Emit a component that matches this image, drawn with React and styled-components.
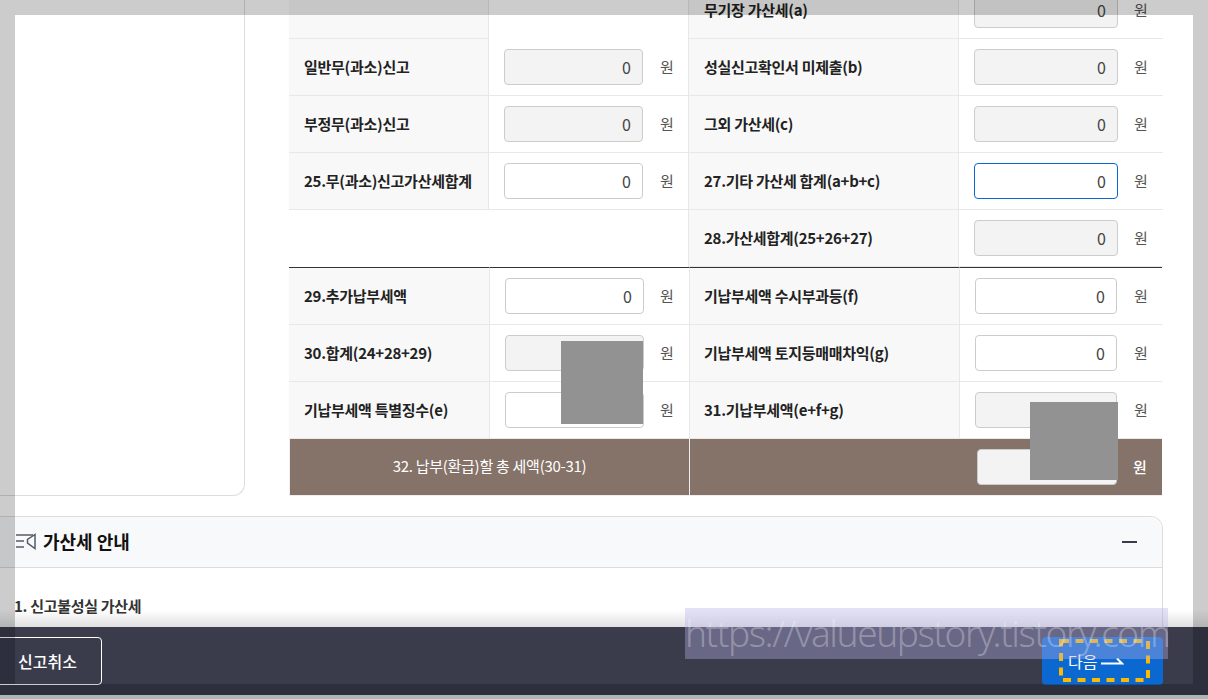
import React from "react";
import styled, { createGlobalStyle } from "styled-components";

const GlobalStyle = createGlobalStyle`
  html, body { margin: 0; padding: 0; background: #fff; }
  body { font-family: "Noto Sans CJK KR", "Noto Sans", sans-serif; }
  * { box-sizing: border-box; }
`;

const Screen = styled.div`
  position: relative;
  width: 1208px;
  height: 699px;
  overflow: hidden;
  display: flex;
  flex-direction: column;
  background: #fff;
`;

const Content = styled.div`
  flex: none;
  height: 627px;
  overflow: hidden;
`;

const Upper = styled.div`
  display: flex;
  gap: 44px;
  margin-top: -18px;
`;

const SidePanel = styled.div`
  flex: none;
  width: 245px;
  height: 514px;
  border-right: 1px solid #dcdcdc;
  border-bottom: 1px solid #dcdcdc;
  border-bottom-right-radius: 12px;
`;

const Tables = styled.div`
  width: 874px;
`;

const Row = styled.div`
  display: grid;
  grid-template-columns: ${(p) => p.$columns};
  height: ${(p) => (p.$first ? 58 : 57)}px;
`;

const Cell = styled.div`
  display: flex;
  align-items: center;
  min-width: 0;
  border-right: 1px solid #e8e8e8;
  border-bottom: 1px solid #e8e8e8;
  border-top: ${(p) => (p.$first ? "1px solid #333" : "0")};
  &:last-child { border-right: 0; }
`;

const Label = styled(Cell)`
  padding: 0 0 2px ${(p) => p.$inset || 15}px;
  background: #f8f8f8;
  color: #222;
  font-size: 15px;
  font-weight: 700;
  letter-spacing: -0.28px;
  white-space: nowrap;
`;

const Value = styled(Cell)`
  gap: ${(p) => p.$gap}px;
  padding-left: 15px;
`;

const Blank = styled(Cell)`
  grid-column: span ${(p) => p.$span};
  border-bottom: 0;
`;

const Amount = styled.input`
  flex: none;
  width: ${(p) => p.$width}px;
  height: 36px;
  padding: 0 11px 0 0;
  border: 1px solid ${(p) => (p.$focused ? "#0b68d0" : "#ccc")};
  border-radius: 4px;
  outline: 0;
  background: ${(p) => (p.$locked ? "#f3f3f3" : "#fff")};
  color: #444;
  font-family: inherit;
  font-size: 16px;
  text-align: right;
`;

const Unit = styled.span`
  position: relative;
  top: -1px;
  color: #555;
  font-size: 15px;
  line-height: 1;
`;

const TotalRow = styled.div`
  display: grid;
  grid-template-columns: 400px 472px;
  width: 873px;
  height: 57px;
  background: #857268;
  border-left: 1px solid #eee;
  border-bottom: 1px solid #eee;
  color: #fff;
`;

const TotalLabel = styled.div`
  display: flex;
  align-items: center;
  justify-content: center;
  padding-bottom: 3px;
  border-right: 1px solid #eee;
  font-size: 15px;
  letter-spacing: -0.28px;
`;

const TotalValue = styled.div`
  display: flex;
  align-items: center;
  gap: 16px;
  padding-left: 287px;
`;

const TotalUnit = styled(Unit)`
  color: #fff;
  font-weight: 500;
`;

const NoticeCard = styled.section`
  width: 1175px;
  height: 200px;
  margin: 20px 0 0 -12px;
  border: 1px solid #dcdcdc;
  border-radius: 12px;
`;

const NoticeHeader = styled.header`
  display: flex;
  align-items: center;
  gap: 7px;
  height: 51px;
  padding: 0 25px 0 27px;
  background: #f8f9fb;
  border-bottom: 1px solid #dcdcdc;
  border-radius: 12px 12px 0 0;
`;

const NoticeTitle = styled.h3`
  flex: 1;
  margin: 0;
  padding-bottom: 3px;
  color: #111;
  font-size: 18px;
  font-weight: 700;
`;

const Collapse = styled.span`
  width: 15px;
  height: 2px;
  background: #3a3b4b;
`;

const NoticeBody = styled.div`
  padding: 27px 0 0 25px;
  color: #333;
  font-size: 15px;
  font-weight: 700;
  letter-spacing: -0.3px;
`;

const Bar = styled.footer`
  position: relative;
  flex: none;
  display: flex;
  justify-content: space-between;
  height: 68px;
  padding: 10px 45px 0 0;
  background: #3a3b4b;
  &::before {
    content: "";
    position: absolute;
    left: 0;
    right: 0;
    top: -17px;
    height: 17px;
    background: linear-gradient(rgba(0, 0, 0, 0), rgba(0, 0, 0, 0.12));
  }
`;

const CancelButton = styled.button`
  width: 122px;
  height: 48px;
  margin-left: -20px;
  padding-left: 19px;
  border: 1px solid #fff;
  border-radius: 4px;
  background: transparent;
  color: #fff;
  font-family: inherit;
  font-size: 16px;
  font-weight: 500;
`;

const NextButton = styled.button`
  position: relative;
  display: flex;
  align-items: center;
  gap: 4px;
  width: 121px;
  height: 48px;
  padding: 0 0 0 26px;
  border: 0;
  border-radius: 4px;
  background: #0b68d0;
  color: #fff;
  font-family: inherit;
  font-size: 16px;
`;

const DashedMark = styled.svg`
  position: absolute;
  top: 2px;
  left: 17px;
`;

const Strip = styled.div`
  flex: none;
  height: 4px;
  background: #d3e6e1;
`;

const Frame = styled.div`
  position: absolute;
  inset: 0;
  border: 15px solid rgba(0, 0, 0, 0.2);
  pointer-events: none;
`;

const Mask = styled.div`
  position: absolute;
  left: ${(p) => p.$x}px;
  top: ${(p) => p.$y}px;
  width: ${(p) => p.$w}px;
  height: ${(p) => p.$h}px;
  background: #929292;
`;

const Watermark = styled.div`
  position: absolute;
  left: 685px;
  top: 608px;
  width: 483px;
  height: 51px;
  background: rgba(179, 176, 229, 0.38);
  color: rgba(255, 255, 255, 0.3);
  font-family: "Noto Sans", sans-serif;
  font-size: 37px;
  font-weight: 300;
  letter-spacing: -1.43px;
  line-height: 49px;
  white-space: nowrap;
`;

const UPPER_COLUMNS = "200px 200px 270px 204px";
const LOWER_COLUMNS = "201px 200px 270px 202px";

const upperRows = [
  { left: "", leftEmpty: true, right: "무기장 가산세(a)" },
  { left: "일반무(과소)신고", leftLocked: true, right: "성실신고확인서 미제출(b)" },
  { left: "부정무(과소)신고", leftLocked: true, right: "그외 가산세(c)" },
  { left: "25.무(과소)신고가산세합계", right: "27.기타 가산세 합계(a+b+c)", rightOpen: true, focused: true },
  { blank: true, right: "28.가산세합계(25+26+27)" },
];

const lowerRows = [
  { left: "29.추가납부세액", right: "기납부세액 수시부과등(f)", rightOpen: true },
  { left: "30.합계(24+28+29)", leftLocked: true, hideLeft: true, right: "기납부세액 토지등매매차익(g)", rightOpen: true },
  { left: "기납부세액 특별징수(e)", hideLeft: true, right: "31.기납부세액(e+f+g)", hideRight: true },
];

function AmountCell({ width, gap, locked, focused, hidden, first }) {
  return (
    <Value $first={first} $gap={gap}>
      <Amount
        readOnly
        value={hidden ? "" : "0"}
        $width={width}
        $locked={locked}
        $focused={focused}
      />
      <Unit>원</Unit>
    </Value>
  );
}

function NoticeIcon() {
  return (
    <svg width="20" height="18" viewBox="0 0 20 18" fill="none" stroke="#555b66" strokeWidth="1.5">
      <path d="M0 2H17M0 8H8M0 14H8" />
      <path d="M19 1.5L11.5 6.5V10L19 15.5Z" />
    </svg>
  );
}

function ArrowIcon() {
  return (
    <svg width="23" height="8" viewBox="0 0 23 8" fill="none" stroke="#fff" strokeWidth="2">
      <path d="M0 6.5H21L16 1.5" />
    </svg>
  );
}

export default function App() {
  return (
    <Screen>
      <GlobalStyle />
      <Content>
        <Upper>
          <SidePanel />
          <Tables>
            {upperRows.map((row, i) => (
              <Row key={i} $columns={UPPER_COLUMNS}>
                {row.blank ? (
                  <Blank $span={2} />
                ) : (
                  <>
                    <Label>{row.left}</Label>
                    {row.leftEmpty ? (
                      <Blank $span={1} />
                    ) : (
                      <AmountCell width={139} gap={17} locked={row.leftLocked} />
                    )}
                  </>
                )}
                <Label>{row.right}</Label>
                <AmountCell width={144} gap={16} locked={!row.rightOpen} focused={row.focused} />
              </Row>
            ))}
            {lowerRows.map((row, i) => (
              <Row key={i} $columns={LOWER_COLUMNS} $first={i === 0}>
                <Label $first={i === 0}>{row.left}</Label>
                <AmountCell first={i === 0} width={139} gap={16} locked={row.leftLocked} hidden={row.hideLeft} />
                <Label $first={i === 0} $inset={14}>{row.right}</Label>
                <AmountCell first={i === 0} width={142} gap={17} locked={!row.rightOpen} hidden={row.hideRight} />
              </Row>
            ))}
            <TotalRow>
              <TotalLabel>32. 납부(환급)할 총 세액(30-31)</TotalLabel>
              <TotalValue>
                <Amount readOnly value="" $width={140} $locked />
                <TotalUnit>원</TotalUnit>
              </TotalValue>
            </TotalRow>
          </Tables>
        </Upper>
        <NoticeCard>
          <NoticeHeader>
            <NoticeIcon />
            <NoticeTitle>가산세 안내</NoticeTitle>
            <Collapse />
          </NoticeHeader>
          <NoticeBody>1. 신고불성실 가산세</NoticeBody>
        </NoticeCard>
      </Content>
      <Bar>
        <CancelButton>신고취소</CancelButton>
        <NextButton>
          다음 <ArrowIcon />
          <DashedMark width="91" height="43" viewBox="0 0 91 43" fill="none">
            <rect x="2" y="2" width="87" height="39" stroke="#fcb900" strokeWidth="4" strokeDasharray="8 6.5" />
          </DashedMark>
        </NextButton>
      </Bar>
      <Strip />
      <Mask $x={561} $y={341} $w={82} $h={83} />
      <Mask $x={1030} $y={402} $w={88} $h={78} />
      <Frame />
      <Watermark>https://valueupstory.tistory.com</Watermark>
    </Screen>
  );
}
